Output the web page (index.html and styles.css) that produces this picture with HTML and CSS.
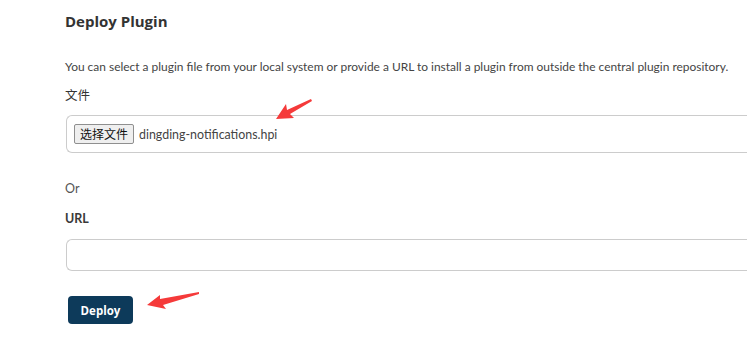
FILE: index.html
```html
<!DOCTYPE html>
<html lang="en">
<head>
  <meta charset="UTF-8" />
  <title>Deploy Plugin</title>
  <link rel="stylesheet" href="styles.css">
</head>
<body>

  <div class="container">
    <h2 class="title">Deploy Plugin</h2>
    <p class="desc">You can select a plugin file from your local system or provide a URL to install a plugin from outside the central plugin repository.</p>

    <label class="field-label">文件</label>
    <div class="file-box">
      <span class="file-btn">选择文件</span>
      <span class="file-name">dingding-notifications.hpi</span>
    </div>

    <p class="or">Or</p>

    <label class="field-label bold">URL</label>
    <div class="url-box"></div>

    <button class="btn">Deploy</button>
  </div>

  <!-- annotation arrows -->
  <svg class="arrows" width="747" height="341" viewBox="0 0 747 341">
    <polygon points="276,119 286,104 287,110 311,99 312,101 290,114 294,118" fill="#f53a3a" />
    <polygon points="147,305 160,295 160,299 199,292 199,294 163,305 166,309" fill="#f53a3a" />
  </svg>

</body>
</html>
```

FILE: styles.css
```css
body {
  margin: 0;
  background-color: #fff;
  font-family: 'Lato', 'Noto Sans CJK SC', sans-serif;
  color: #333;
}

.container {
  padding: 12px 0 0 65px;
}

.title {
  font-family: 'Open Sans', sans-serif;
  font-size: 15px;
  font-weight: 700;
  color: #333;
  margin: 0 0 28px;
  line-height: 18px;
}

.desc {
  font-size: 11.95px;
  color: #444;
  margin: 0 0 11px;
  line-height: 18px;
  white-space: nowrap;
}

.field-label {
  display: block;
  font-size: 12.5px;
  color: #333;
  line-height: 18px;
  margin-bottom: 10px;
}

.field-label.bold {
  font-weight: 700;
  color: #3a3a3a;
  margin-bottom: 11px;
}

.file-box {
  display: flex;
  align-items: center;
  height: 36px;
  margin-left: 1px;
  border: 1px solid #ccc;
  border-right: none;
  border-radius: 6px 0 0 6px;
  padding-left: 7px;
}

.file-btn {
  font-family: 'Noto Sans CJK SC', sans-serif;
  font-size: 12px;
  line-height: 18px;
  padding: 0 5px;
  background-color: #efefef;
  border: 1px solid #8f8f8f;
  border-radius: 2px;
  color: #111;
}

.file-name {
  font-size: 12.4px;
  color: #444;
  margin-left: 5px;
}

.or {
  font-size: 12.5px;
  color: #555;
  margin: 27px 0 12px;
  line-height: 18px;
}

.url-box {
  height: 30px;
  margin-left: 1px;
  border: 1px solid #ccc;
  border-right: none;
  border-radius: 6px 0 0 6px;
}

.btn {
  display: block;
  margin: 25px 0 0 3px;
  width: 65px;
  height: 28px;
  border: none;
  border-radius: 4px;
  background-color: #0d3a5a;
  color: #fff;
  font-family: 'Open Sans', sans-serif;
  font-size: 11.5px;
  font-weight: 700;
}

.arrows {
  position: absolute;
  top: 0;
  left: 0;
  pointer-events: none;
}
```
